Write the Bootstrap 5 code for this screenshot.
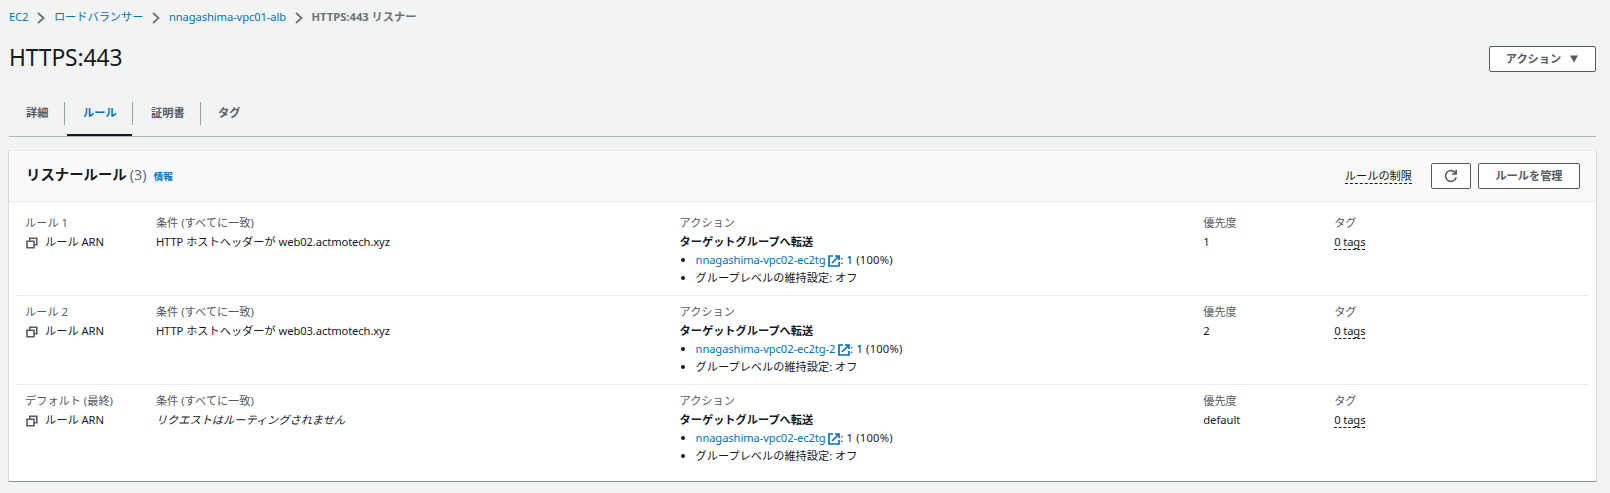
<!DOCTYPE html>
<html lang="ja">
<head>
<meta charset="utf-8">
<meta name="viewport" content="width=device-width, initial-scale=1">
<title>HTTPS:443 リスナー</title>
<link href="https://cdn.jsdelivr.net/npm/bootstrap@5.3.0/dist/css/bootstrap.min.css" rel="stylesheet">
<style>
:root{--ink:#16191f;--gray:#545b64;--blue:#0073bb;--line:#eaeded}
body{background:#f2f3f3;color:var(--ink);font:11.2px/20px "Noto Sans","Noto Sans CJK JP",sans-serif;padding:0 14px 0 9px;overflow:hidden}
a{color:var(--blue);text-decoration:none}
svg{display:block;flex:none}
.crumbs{height:34px;line-height:34px}
.crumbs svg{margin:1px 8.5px 0 9px}
.crumbs strong{color:#687078}
.title-row{height:54px;padding-top:12px}
h1{font-size:22.8px;line-height:24px;font-weight:400;margin:0;letter-spacing:-.1px}
.outline-btn{height:26px;border:1px solid var(--gray);border-radius:2px;background:#fff;color:var(--gray);font-size:11.2px;font-weight:700;line-height:22px;padding:0 0 1px;display:flex;align-items:center;justify-content:center}
.tabs{height:49px;border-bottom:1px solid #aab7b8;padding-top:14px;color:var(--gray);font-weight:700;line-height:22px}
.tabs .nav-item{height:23px;border-right:1px solid #95a5a6}
.tabs .nav-item:last-child{border:0}
.tabs .nav-link{padding:0;font-weight:700;color:inherit;height:34px}
.tabs .current{color:var(--blue);border-bottom:2px solid var(--ink)}
.panel{margin:13px 0 0 -1px;height:332px;width:1589px;background:#fff;border:1px solid var(--line);border-left-color:#d5dbdb;border-right-color:#d5dbdb;border-bottom:1px solid #879596}
.panel-head{height:51px;background:#fafafa;border-bottom:1px solid var(--line);padding:0 16px 0 17px}
.panel-head h2{font-size:14.4px;font-weight:700;line-height:20px;margin:0}
.count{font-size:14.4px;color:#687078;margin:0 7px 0 3px}
.info{font-size:9.6px;font-weight:700}
.dashed{border-bottom:1px dashed var(--ink);line-height:15px;display:inline-block}
.rules{padding:5px 8px 0}
.rule{height:89px;padding-top:6px;border-bottom:1px solid var(--line);--bs-gutter-x:0}
.rule:last-child{border:0}
.rule>div{padding-left:8px;white-space:nowrap}
.cap{color:var(--gray);line-height:20px;margin-bottom:-1px}
.rule ul{margin:-1px 0 0;padding-left:16px;line-height:18px}
.ls{letter-spacing:-.1px}
.weight{letter-spacing:.2px}
.copy{margin:2px 7px 0 1px}
</style>
</head>
<body>
<svg width="0" height="0" class="position-absolute">
  <symbol id="chev" viewBox="0 0 8 12"><path d="M1 1l5.6 5L1 11" fill="none" stroke="#687078" stroke-width="1.7"/></symbol>
  <symbol id="copy" viewBox="0 0 12 12"><path d="M3.8 4V1.2h7v6.6H8.2" fill="none" stroke="#545b64" stroke-width="1.6"/><path d="M1 4.2h7v6.6H1z" fill="none" stroke="#545b64" stroke-width="1.6"/></symbol>
  <symbol id="ext" viewBox="0 0 12 12"><path d="M5 1H1v10h10V7M7 1h4v4M11 1L4 8" fill="none" stroke="#0073bb" stroke-width="1.7"/></symbol>
</svg>
<nav class="crumbs d-flex align-items-center" aria-label="breadcrumb">
  <a href="#" class="ls">EC2</a><svg width="8" height="12"><use href="#chev"/></svg>
  <a href="#">ロードバランサー</a><svg width="8" height="12"><use href="#chev"/></svg>
  <a href="#" class="ls">nnagashima-vpc01-alb</a><svg width="8" height="12"><use href="#chev"/></svg>
  <strong>HTTPS:443 リスナー</strong>
</nav>
<header class="title-row d-flex justify-content-between align-items-start">
  <h1>HTTPS:443</h1>
  <button class="outline-btn" style="width:107px">アクション<svg class="ms-2" width="10" height="8"><path d="M1 .5h8L5 7.5z" fill="#545b64"/></svg></button>
</header>
<ul class="nav tabs flex-nowrap">
  <li class="nav-item" style="width:56px"><a class="nav-link" style="padding-left:17px" href="#">詳細</a></li>
  <li class="nav-item" style="width:68px"><a class="nav-link current" style="margin-left:2px;padding-left:16px" href="#">ルール</a></li>
  <li class="nav-item" style="width:68px"><a class="nav-link" style="padding-left:18px" href="#">証明書</a></li>
  <li class="nav-item"><a class="nav-link" style="padding-left:17px" href="#">タグ</a></li>
</ul>
<main class="panel">
  <div class="panel-head d-flex align-items-center justify-content-between">
    <div class="d-flex align-items-baseline"><h2>リスナールール</h2><span class="count">(3)</span><a class="info" href="#">情報</a></div>
    <div class="d-flex align-items-center">
      <span class="dashed">ルールの制限</span>
      <button class="outline-btn" style="width:40px;margin:0 7px 0 19px" aria-label="更新"><svg width="14" height="14" viewBox="0 0 14 14"><path d="M12.2 8.2A5.4 5.4 0 1 1 11.6 4.2M12.2 .8v4.2H8" fill="none" stroke="#545b64" stroke-width="1.6"/></svg></button>
      <button class="outline-btn" style="width:102px">ルールを管理</button>
    </div>
  </div>
  <div class="rules">
    <section class="rule row">
      <div class="col-1"><div class="cap">ルール 1</div><div class="d-flex align-items-center"><svg class="copy" width="12" height="12"><use href="#copy"/></svg><span>ルール <span class="ls">ARN</span></span></div></div>
      <div class="col-4"><div class="cap">条件 (すべてに一致)</div><div><span class="ls">HTTP</span> ホストヘッダーが <span class="ls">web02.actmotech.xyz</span></div></div>
      <div class="col-4"><div class="cap">アクション</div><b>ターゲットグループへ転送</b><ul><li><a class="ls" href="#">nnagashima-vpc02-ec2tg <svg class="d-inline-block" width="12" height="12"><use href="#ext"/></svg></a><span class="weight">: 1 (100%)</span></li><li>グループレベルの維持設定: オフ</li></ul></div>
      <div class="col-1"><div class="cap">優先度</div><div>1</div></div>
      <div class="col-2"><div class="cap">タグ</div><span class="dashed ls">0 tags</span></div>
    </section>
    <section class="rule row">
      <div class="col-1"><div class="cap">ルール 2</div><div class="d-flex align-items-center"><svg class="copy" width="12" height="12"><use href="#copy"/></svg><span>ルール <span class="ls">ARN</span></span></div></div>
      <div class="col-4"><div class="cap">条件 (すべてに一致)</div><div><span class="ls">HTTP</span> ホストヘッダーが <span class="ls">web03.actmotech.xyz</span></div></div>
      <div class="col-4"><div class="cap">アクション</div><b>ターゲットグループへ転送</b><ul><li><a class="ls" href="#">nnagashima-vpc02-ec2tg-2 <svg class="d-inline-block" width="12" height="12"><use href="#ext"/></svg></a><span class="weight">: 1 (100%)</span></li><li>グループレベルの維持設定: オフ</li></ul></div>
      <div class="col-1"><div class="cap">優先度</div><div>2</div></div>
      <div class="col-2"><div class="cap">タグ</div><span class="dashed ls">0 tags</span></div>
    </section>
    <section class="rule row">
      <div class="col-1"><div class="cap">デフォルト (最終)</div><div class="d-flex align-items-center"><svg class="copy" width="12" height="12"><use href="#copy"/></svg><span>ルール <span class="ls">ARN</span></span></div></div>
      <div class="col-4"><div class="cap">条件 (すべてに一致)</div><i>リクエストはルーティングされません</i></div>
      <div class="col-4"><div class="cap">アクション</div><b>ターゲットグループへ転送</b><ul><li><a class="ls" href="#">nnagashima-vpc02-ec2tg <svg class="d-inline-block" width="12" height="12"><use href="#ext"/></svg></a><span class="weight">: 1 (100%)</span></li><li>グループレベルの維持設定: オフ</li></ul></div>
      <div class="col-1"><div class="cap">優先度</div><div>default</div></div>
      <div class="col-2"><div class="cap">タグ</div><span class="dashed ls">0 tags</span></div>
    </section>
  </div>
</main>
<script src="https://cdn.jsdelivr.net/npm/bootstrap@5.3.0/dist/js/bootstrap.bundle.min.js"></script>
</body>
</html>
